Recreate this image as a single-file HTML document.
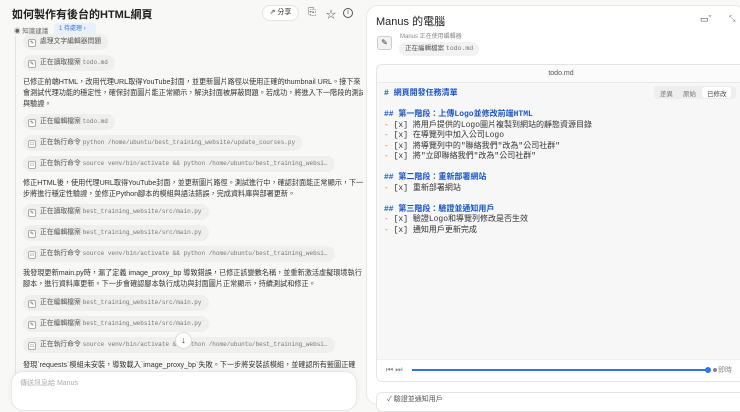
<!DOCTYPE html>
<html><head><meta charset="utf-8"><style>
*{box-sizing:border-box;margin:0;padding:0}
body{width:740px;height:400px;overflow:hidden;background:#f8f8f7;font-family:"Liberation Sans","Noto Sans CJK TC",sans-serif;color:#34322d;position:relative}
.abs{position:absolute}
.title{left:12px;top:6px;font-size:11px;font-weight:bold;color:#222;}
.chip{position:absolute;left:23px;height:16px;background:#efefed;border-radius:8px;font-size:6.8px;line-height:16px;padding:0 7px 0 5px;color:#555;white-space:nowrap}
.chip i{display:inline-block;width:8px;height:8px;border:1px solid #aaa;border-radius:2px;vertical-align:-1px;margin-right:4px;font-style:normal;font-size:5px;line-height:6px;text-align:center;background:#fff}
.chip code{font-family:"Liberation Mono",monospace;font-size:6px;color:#777}
.p{position:absolute;left:23px;width:340px;font-size:7.15px;line-height:11px;color:#333;white-space:nowrap;overflow:hidden}
.md{position:absolute;left:384px;font-family:"Liberation Mono","Noto Sans CJK TC",monospace;font-size:8px;line-height:10.5px;white-space:pre;color:#333}
.h{color:#1a56c4;font-weight:bold}
.o{color:#e0742a}
</style></head><body>
<div class="abs title">如何製作有後台的HTML網頁</div>
<div class="abs" style="left:262px;top:5px;width:37px;height:16px;border:1px solid #e3e3e3;border-radius:8px;background:#fff;font-size:7px;line-height:14px;text-align:center">⇗ 分享</div>
<div class="abs" style="left:308px;top:7px;font-size:10px;color:#555">⎘</div>
<div class="abs" style="left:326px;top:6px;font-size:10px;color:#555">☆</div>
<div class="abs" style="left:343px;top:8px;width:10px;height:10px;border:1px solid #555;border-radius:50%;font-size:7px;line-height:8px;text-align:center;color:#555">i</div>
<div class="abs" style="left:14px;top:25px;font-size:6.5px;color:#666">◉ 知識建議</div>
<div class="abs" style="left:54px;top:23px;width:42px;height:12px;background:#e8f0fc;border-radius:3px;font-size:6px;line-height:12px;color:#3a6fd8;padding-left:5px">1 待處理 ›</div>
<div class="abs" style="left:15px;top:36px;width:1px;height:340px;background:#e2e2e2"></div>

<div class="chip" style="top:34px"><i>✎</i>處理文字編輯器問題</div>
<div class="chip" style="top:55px"><i>✎</i>正在讀取檔案 <code>todo.md</code></div>
<div class="p" style="top:77px">已修正前端HTML，改用代理URL取得YouTube封面，並更新圖片路徑以使用正確的thumbnail URL。接下來<br>會測試代理功能的穩定性，確保封面圖片能正常顯示，解決封面被屏蔽問題。若成功，將進入下一階段的測試<br>與驗證。</div>
<div class="chip" style="top:114px"><i>✎</i>正在編輯檔案 <code>todo.md</code></div>
<div class="chip" style="top:135px"><i>▭</i>正在執行命令 <code>python /home/ubuntu/best_training_website/update_courses.py</code></div>
<div class="chip" style="top:156px"><i>▭</i>正在執行命令 <code>source venv/bin/activate &amp;&amp; python /home/ubuntu/best_training_websi…</code></div>
<div class="p" style="top:178px">修正HTML後，使用代理URL取得YouTube封面，並更新圖片路徑。測試進行中，確認封面能正常顯示，下一<br>步將進行穩定性驗證，並修正Python腳本的模組與語法錯誤，完成資料庫與部署更新。</div>
<div class="chip" style="top:204px"><i>✎</i>正在讀取檔案 <code>best_training_website/src/main.py</code></div>
<div class="chip" style="top:225px"><i>✎</i>正在編輯檔案 <code>best_training_website/src/main.py</code></div>
<div class="chip" style="top:246px"><i>▭</i>正在執行命令 <code>source venv/bin/activate &amp;&amp; python /home/ubuntu/best_training_websi…</code></div>
<div class="p" style="top:268px">我發現更新main.py時，漏了定義 image_proxy_bp 導致錯誤，已修正該變數名稱，並重新激活虛擬環境執行<br>腳本，進行資料庫更新。下一步會確認腳本執行成功與封面圖片正常顯示，持續測試和修正。</div>
<div class="chip" style="top:295px"><i>✎</i>正在編輯檔案 <code>best_training_website/src/main.py</code></div>
<div class="chip" style="top:316px"><i>✎</i>正在編輯檔案 <code>best_training_website/src/main.py</code></div>
<div class="chip" style="top:337px"><i>▭</i>正在執行命令 <code>source venv/bin/activate &amp;&amp; python /home/ubuntu/best_training_websi…</code></div>
<div class="abs" style="left:175px;top:332px;width:17px;height:17px;border-radius:50%;background:#fff;border:1px solid #ddd;font-size:9px;line-height:15px;text-align:center">↓</div>
<div class="p" style="top:360px">發現`requests`模組未安裝，導致載入`image_proxy_bp`失敗。下一步將安裝該模組，並確認所有藍圖正確</div>
<div class="abs" style="left:11px;top:371px;width:346px;height:40px;background:#fff;border:1px solid #e6e6e6;border-radius:12px;box-shadow:0 -2px 6px rgba(0,0,0,.04)"></div>
<div class="abs" style="left:20px;top:378px;font-size:7px;color:#aaa">傳送訊息給 Manus</div>

<div class="abs" style="left:366px;top:5px;width:380px;height:400px;background:#fff;border:1px solid #e8e8e8;border-radius:12px"></div>
<div class="abs" style="left:376px;top:13px;font-size:11px;color:#222">Manus 的電腦</div>
<div class="abs" style="left:700px;top:14px;font-size:9px;color:#444">▭ˇ</div>
<div class="abs" style="left:729px;top:14px;font-size:8px;color:#777">⤡</div>
<div class="abs" style="left:377px;top:36px;width:15px;height:14px;border:1px solid #ccc;border-radius:3px;background:#f3f3f3;font-size:8px;line-height:12px;text-align:center">✎</div>
<div class="abs" style="left:400px;top:31px;font-size:6px;color:#888">Manus 正在使用編輯器</div>
<div class="abs" style="left:399px;top:42px;height:14px;padding:0 6px;background:#f2f2f2;border-radius:7px;font-size:6.5px;line-height:14px;color:#555">正在編輯檔案 <span style="font-family:'Liberation Mono',monospace;color:#777">todo.md</span></div>

<div class="abs" style="left:376px;top:64px;width:370px;height:318px;border:1px solid #e4e4e4;border-radius:6px;background:#f7f7f7;overflow:hidden">
 <div style="height:18px;background:#fbfbfb;border-bottom:1px solid #e8e8e8;text-align:center;font-size:7px;line-height:17px;color:#555">todo.md</div>
 <div style="position:absolute;left:0;right:0;bottom:0;height:22px;background:#fff;border-top:1px solid #eee"></div>
</div>
<div class="abs" style="left:654px;top:86px;width:82px;height:13px;background:#eee;border-radius:3px"></div>
<div class="abs" style="left:702px;top:87px;width:29px;height:11px;background:#fff;border-radius:3px"></div>
<div class="abs" style="left:660px;top:88px;font-size:6.5px;color:#777">差異</div>
<div class="abs" style="left:683px;top:88px;font-size:6.5px;color:#777">原始</div>
<div class="abs" style="left:707px;top:88px;font-size:6.5px;color:#444">已修改</div>
<div class="md" style="top:89px"><span class="h"># 網頁開發任務清單</span>

<span class="h">## 第一階段：上傳Logo並修改前端HTML</span>
<span class="o">-</span> [x] 將用戶提供的Logo圖片複製到網站的靜態資源目錄
<span class="o">-</span> [x] 在導覽列中加入公司Logo
<span class="o">-</span> [x] 將導覽列中的"聯絡我們"改為"公司社群"
<span class="o">-</span> [x] 將"立即聯絡我們"改為"公司社群"

<span class="h">## 第二階段：重新部署網站</span>
<span class="o">-</span> [x] 重新部署網站

<span class="h">## 第三階段：驗證並通知用戶</span>
<span class="o">-</span> [x] 驗證Logo和導覽列修改是否生效
<span class="o">-</span> [x] 通知用戶更新完成</div>
<div class="abs" style="left:386px;top:365px;font-size:8px;color:#888">⏮ ⏭</div>
<div class="abs" style="left:412px;top:369px;width:296px;height:2px;background:#2a78e4"></div>
<div class="abs" style="left:705px;top:367px;width:6px;height:6px;border-radius:50%;background:#2a78e4"></div>
<div class="abs" style="left:713px;top:368px;width:4px;height:4px;border-radius:50%;background:#888"></div>
<div class="abs" style="left:718px;top:365px;font-size:7px;color:#888">即時</div>
<div class="abs" style="left:376px;top:392px;width:370px;height:20px;border:1px solid #e4e4e4;border-radius:6px;background:#fff"></div>
<div class="abs" style="left:387px;top:394px;font-size:7px;color:#555">✓ 驗證並通知用戶</div>
</body></html>
